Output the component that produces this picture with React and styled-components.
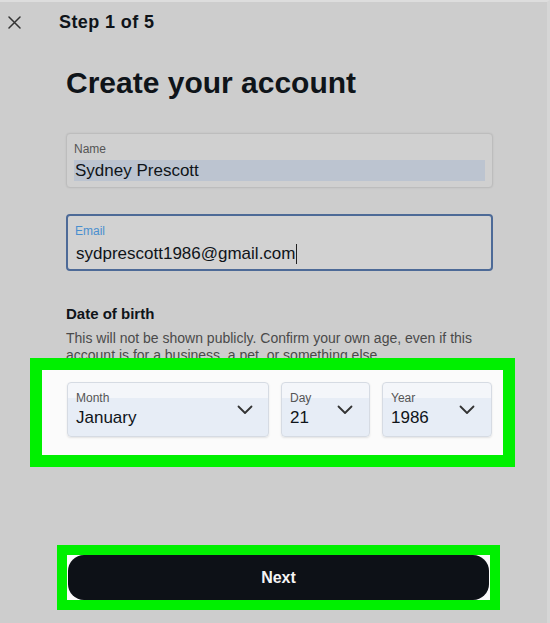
import React from 'react'
import styled, { createGlobalStyle } from 'styled-components'

const GlobalStyle = createGlobalStyle`
  * { box-sizing: border-box; }
  body {
    margin: 0;
    font-family: 'Liberation Sans', Arial, sans-serif;
    color: #0f1419;
  }
`

const Page = styled.div`
  width: 550px;
  height: 623px;
  background: #cdcdcd;
  border-top: 2px solid #dddddd;
  border-right: 3px solid #d6d6d6;
  overflow: hidden;
`

const Header = styled.header`
  display: flex;
  align-items: center;
  height: 40px;
  padding-left: 8px;
`

const CloseButton = styled.button`
  display: flex;
  padding: 0;
  border: none;
  background: none;
  color: #333;
`

const StepText = styled.span`
  margin-left: 38px;
  font-size: 18px;
  font-weight: 700;
  letter-spacing: 0.4px;
`

const Main = styled.main`
  padding: 0 54px 0 66px;
  display: flex;
  flex-direction: column;
`

const Title = styled.h1`
  margin: 23px 0 0;
  font-size: 30px;
  line-height: 36px;
  font-weight: 700;
`

const Field = styled.div`
  height: ${p => (p.focused ? '57px' : '55px')};
  margin-top: ${p => p.gap}px;
  padding: 8px 7px 0;
  border: ${p => (p.focused ? '2px solid #4d6a97' : '1px solid #bdbdbd')};
  border-radius: 4px;
  background: ${p => (p.focused ? '#d2d2d2' : '#d0d0d0')};
  box-shadow: ${p => (p.focused ? 'none' : '0 0 2px rgba(0,0,0,0.08)')};
`

const FieldLabel = styled.div`
  font-size: 12px;
  line-height: 14px;
  color: ${p => (p.active ? '#4a8fcf' : '#555')};
`

const FieldValue = styled.div`
  display: flex;
  align-items: center;
  margin-top: ${p => (p.selected ? '4px' : '5px')};
  height: 21px;
  padding-left: 1px;
  font-size: 17px;
  line-height: 21px;
  background: ${p => (p.selected ? '#bcc4d0' : 'transparent')};
`

const Caret = styled.span`
  display: inline-block;
  width: 0;
  height: 20px;
  margin-left: 1px;
  border-left: 1.5px solid #222;
`

const SectionTitle = styled.h2`
  margin: 34px 0 0;
  font-size: 15px;
  line-height: 18px;
  font-weight: 700;
`

const Description = styled.p`
  margin: 7px 0 0;
  font-size: 14px;
  line-height: 17px;
  color: #4a4a4a;
`

const Highlight = styled.div`
  position: relative;
  margin: ${p => p.mt}px ${p => p.mr}px 0 ${p => p.ml}px;
  border: ${p => p.bw}px solid #00f000;
  background: #fbfbfb;
  padding: ${p => p.pad};
`

const SelectRow = styled.div`
  display: grid;
  grid-template-columns: 202px 89px 1fr;
  gap: 12px;
`

const Select = styled.div`
  position: relative;
  height: 55px;
  padding: 8px 8px 0;
  border: 1px solid #d6dbe3;
  border-radius: 4px;
  background: linear-gradient(to bottom, #f4f6fa 0, #f4f6fa 15px, #e7edf6 15px);
  box-shadow: 0 1px 2px rgba(0, 0, 0, 0.1);
`

const SelectLabel = styled.div`
  font-size: 12px;
  line-height: 14px;
  color: #555;
`

const SelectValue = styled.div`
  margin-top: 2px;
  font-size: 17px;
  line-height: 21px;
`

const Chevron = styled.svg`
  position: absolute;
  right: ${p => p.right}px;
  top: 50%;
  transform: translateY(-50%);
`

const NextButton = styled.button`
  display: block;
  width: 100%;
  height: 45px;
  border: none;
  border-radius: 16px;
  background: #0d1117;
  color: #f5f5f5;
  font-family: inherit;
  font-size: 16px;
  font-weight: 700;
`

const ChevronIcon = ({ right }) => (
  <Chevron right={right} width="16" height="10" viewBox="0 0 16 10">
    <path d="M1.5 1.5 L8 8 L14.5 1.5" fill="none" stroke="#333" strokeWidth="1.8" strokeLinecap="round" strokeLinejoin="round" />
  </Chevron>
)

const selects = [
  { label: 'Month', value: 'January', right: 15 },
  { label: 'Day', value: '21', right: 16 },
  { label: 'Year', value: '1986', right: 16 }
]

const App = () => (
  <Page>
    <GlobalStyle />
    <Header>
      <CloseButton aria-label="Close">
        <svg width="13" height="13" viewBox="0 0 13 13">
          <path d="M1 1 L12 12 M12 1 L1 12" stroke="#333" strokeWidth="1.5" strokeLinecap="round" />
        </svg>
      </CloseButton>
      <StepText>Step 1 of 5</StepText>
    </Header>
    <Main>
      <Title>Create your account</Title>

      <Field gap={32}>
        <FieldLabel>Name</FieldLabel>
        <FieldValue selected>Sydney Prescott</FieldValue>
      </Field>

      <Field gap={26} focused>
        <FieldLabel active>Email</FieldLabel>
        <FieldValue>
          sydprescott1986@gmail.com
          <Caret />
        </FieldValue>
      </Field>

      <SectionTitle>Date of birth</SectionTitle>
      <Description>
        This will not be shown publicly. Confirm your own age, even if this account is for a
        business, a pet, or something else.
      </Description>

      <Highlight mt={-6} ml={-36} mr={-22} bw={12} pad="12px 11px 18px 25px">
        <SelectRow>
          {selects.map(s => (
            <Select key={s.label}>
              <SelectLabel>{s.label}</SelectLabel>
              <SelectValue>{s.value}</SelectValue>
              <ChevronIcon right={s.right} />
            </Select>
          ))}
        </SelectRow>
      </Highlight>

      <Highlight mt={78} ml={-9} mr={-7} bw={10} pad="0 1px">
        <NextButton>Next</NextButton>
      </Highlight>
    </Main>
  </Page>
)

export default App
